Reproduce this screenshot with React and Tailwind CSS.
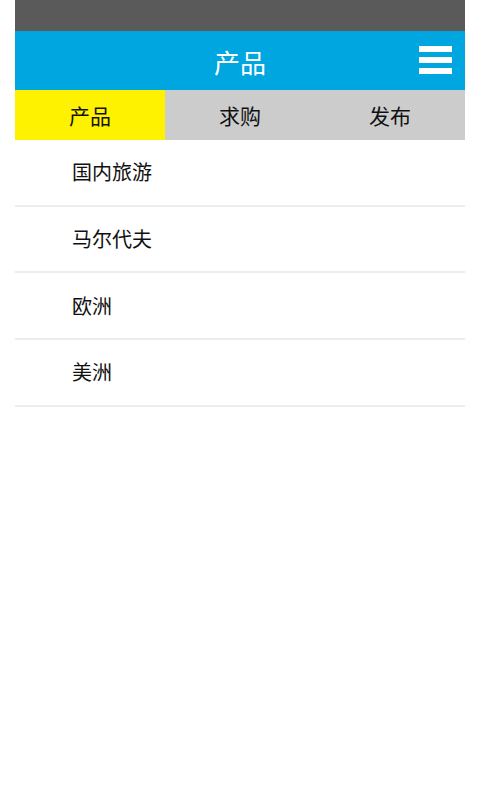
export default function App() {
  const items = ["国内旅游", "马尔代夫", "欧洲", "美洲"];
  const tabs = ["产品", "求购", "发布"];
  return (
    <div
      className="min-h-[800px] w-[480px] bg-white px-[15px]"
      style={{ fontFamily: '"Noto Sans CJK SC", "Noto Sans", sans-serif' }}
    >
      <div className="h-[31px] bg-[#5a5a5a]" />
      <div className="relative flex h-[59px] items-center justify-center bg-[#00a6df]">
        <span className="pt-[2px] text-[26px] leading-none text-white">产品</span>
        <div className="absolute right-[13px] top-[15px] flex flex-col gap-[5px]">
          <div className="h-[6px] w-[33px] bg-white" />
          <div className="h-[6px] w-[33px] bg-white" />
          <div className="h-[6px] w-[33px] bg-white" />
        </div>
      </div>
      <div className="grid h-[50px] grid-cols-3 bg-[#cccccc]">
        {tabs.map((t, i) => (
          <div
            key={t}
            className={`flex items-center justify-center pt-[1px] text-[21px] leading-none text-[#111] ${
              i === 0 ? "bg-[#fff200]" : ""
            }`}
          >
            {t}
          </div>
        ))}
      </div>
      <div className="flex flex-col">
        {items.map((t) => (
          <div
            key={t}
            className="flex h-[66.7px] items-center border-b-2 border-[#ededed] pl-[57px] text-[20px] leading-none text-[#111]"
          >
            {t}
          </div>
        ))}
      </div>
    </div>
  );
}
